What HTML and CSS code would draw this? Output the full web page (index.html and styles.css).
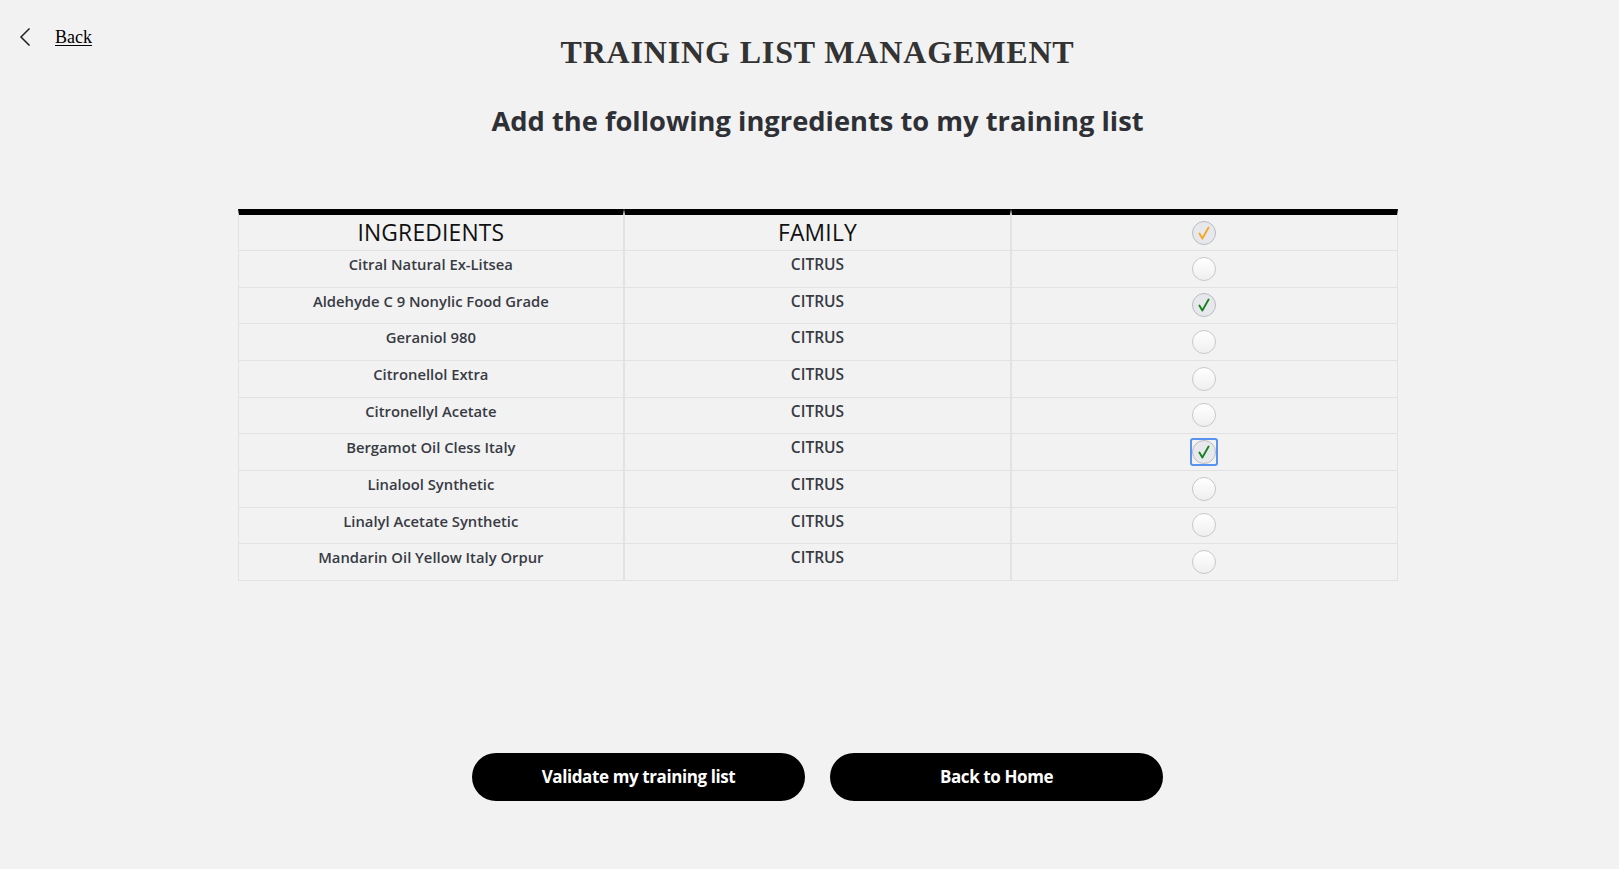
FILE: index.html
```html
<!DOCTYPE html>
<html lang="en">
<head>
<meta charset="utf-8">
<title>Training List Management</title>
<link rel="stylesheet" href="styles.css">
</head>
<body>
<div class="page">
  <header class="header">
    <a class="back" href="#">
      <svg class="back-icon" width="12" height="18" viewBox="0 0 12 18" aria-hidden="true">
        <path d="M10 1 L2 9 L10 17" fill="none" stroke="#222" stroke-width="1.5" stroke-linecap="square"/>
      </svg>
      <span class="back-text">Back</span>
    </a>
    <h1 class="title">TRAINING LIST MANAGEMENT</h1>
  </header>

  <h2 class="subtitle">Add the following ingredients to my training list</h2>

  <table class="list">
    <thead>
      <tr>
        <th>INGREDIENTS</th>
        <th>FAMILY</th>
        <th class="check-cell"><span class="cb cb-all"><svg viewBox="0 0 24 24"><path d="M7 12.5 L10.2 18 L17 6" /></svg></span></th>
      </tr>
    </thead>
    <tbody>
      <tr><td>Citral Natural Ex-Litsea</td><td class="fam">CITRUS</td><td class="check-cell"><span class="cb"></span></td></tr>
      <tr><td>Aldehyde C 9 Nonylic Food Grade</td><td class="fam">CITRUS</td><td class="check-cell"><span class="cb cb-on"><svg viewBox="0 0 24 24"><path d="M7 12.5 L10.2 18 L17 6" /></svg></span></td></tr>
      <tr><td>Geraniol 980</td><td class="fam">CITRUS</td><td class="check-cell"><span class="cb"></span></td></tr>
      <tr><td>Citronellol Extra</td><td class="fam">CITRUS</td><td class="check-cell"><span class="cb"></span></td></tr>
      <tr><td>Citronellyl Acetate</td><td class="fam">CITRUS</td><td class="check-cell"><span class="cb"></span></td></tr>
      <tr><td>Bergamot Oil Cless Italy</td><td class="fam">CITRUS</td><td class="check-cell"><span class="focus"><span class="cb cb-on"><svg viewBox="0 0 24 24"><path d="M7 12.5 L10.2 18 L17 6" /></svg></span></span></td></tr>
      <tr><td>Linalool Synthetic</td><td class="fam">CITRUS</td><td class="check-cell"><span class="cb"></span></td></tr>
      <tr><td>Linalyl Acetate Synthetic</td><td class="fam">CITRUS</td><td class="check-cell"><span class="cb"></span></td></tr>
      <tr><td>Mandarin Oil Yellow Italy Orpur</td><td class="fam">CITRUS</td><td class="check-cell"><span class="cb"></span></td></tr>
    </tbody>
  </table>

  <div class="actions">
    <button class="btn" type="button">Validate my training list</button>
    <button class="btn" type="button">Back to Home</button>
  </div>
</div>
</body>
</html>
```

FILE: styles.css
```css
* { box-sizing: border-box; }

html, body {
  margin: 0;
  background: #f2f2f2;
}

.page {
  padding-left: 16px;
  min-height: 869px;
  display: flex;
  flex-direction: column;
  align-items: center;
}

.header {
  width: 100%;
  display: grid;
  grid-template-columns: 1fr;
  padding-top: 27px;
}

.back {
  grid-area: 1 / 1;
  justify-self: start;
  align-self: start;
  display: flex;
  align-items: center;
  gap: 24px;
  margin-left: 3px;
  color: #000;
  text-decoration: none;
  height: 20px;
}

.back-icon { display: block; }

.back-text {
  font-family: "Liberation Serif", "Times New Roman", serif;
  font-size: 18px;
  text-decoration: underline;
  text-underline-offset: 2px;
  line-height: 20px;
}

.title {
  grid-area: 1 / 1;
  justify-self: center;
  margin: 7px 0 0;
  font-family: "Liberation Serif", "Times New Roman", serif;
  font-weight: 700;
  font-size: 32px;
  line-height: 36px;
  color: #333;
  letter-spacing: 0.85px;
}

.subtitle {
  margin: 33px 0 0;
  font-family: "Open Sans", "Noto Sans", sans-serif;
  font-weight: 700;
  font-size: 27.3px;
  line-height: 36px;
  color: #2e3035;
}

.list {
  margin-top: 70px;
  width: 1160px;
  border-collapse: separate;
  border-spacing: 0;
  table-layout: fixed;
  font-family: "Open Sans", "Noto Sans", sans-serif;
}

.list th,
.list td {
  border-left: 1px solid #e2e2e2;
  border-right: 1px solid #e2e2e2;
  border-bottom: 1px solid #e2e2e2;
  text-align: center;
  padding: 0;
}

.list th {
  border-top: 6px solid #000;
  height: 42px;
  vertical-align: middle;
  font-weight: 400;
  font-size: 22.8px;
  color: #111;
  letter-spacing: 0.2px;
}

.list td {
  height: 36.67px;
  vertical-align: top;
  padding-top: 3px;
  font-size: 14.8px;
  font-weight: 600;
  color: #383b44;
  line-height: 20px;
}

.list td.fam {
  font-size: 15.5px;
}

.list .check-cell {
  vertical-align: middle;
  padding-top: 0;
  line-height: 0;
}

.cb {
  display: inline-block;
  width: 24px;
  height: 24px;
  border-radius: 50%;
  border: 1px solid #c6c8cc;
  background: linear-gradient(180deg, #ffffff 0%, #efefef 100%);
  vertical-align: middle;
}

.cb svg {
  display: block;
  width: 22px;
  height: 22px;
}

.cb svg path {
  fill: none;
  stroke-width: 2;
  stroke-linecap: round;
  stroke-linejoin: round;
}

.cb-all,
.cb-on {
  background: #e6e8ec;
  border-color: #b9bcc2;
}

.cb-all svg path { stroke: #f5a623; }
.cb-on svg path { stroke: #16801c; }

.focus {
  display: inline-block;
  padding: 0;
  border: 2px solid #5a93ef;
  border-radius: 3px;
  line-height: 0;
  vertical-align: middle;
}

.actions {
  margin-top: 172px;
  display: flex;
  gap: 25px;
}

.btn {
  width: 333px;
  height: 48px;
  border: none;
  border-radius: 24px;
  background: #000;
  color: #fff;
  font-family: "Open Sans", "Noto Sans", sans-serif;
  font-weight: 700;
  font-size: 17px;
  letter-spacing: -0.4px;
  cursor: pointer;
}
```
